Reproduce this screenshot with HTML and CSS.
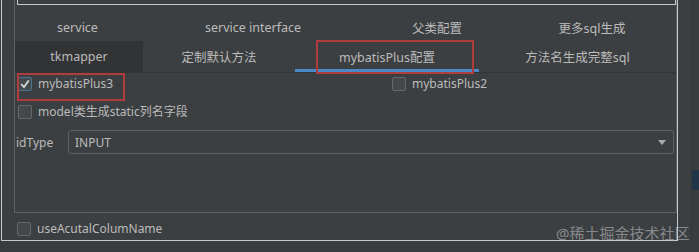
FILE: index.html
```html
<!DOCTYPE html>
<html lang="en">
<head>
  <meta charset="UTF-8" />
  <title>mybatisPlus配置</title>
  <link rel="stylesheet" href="styles.css">
</head>
<body>
  <div class="screen">
    <div class="dialog">
      <div class="panel">
        <div class="topbox"></div>

        <div class="tabs">
          <div class="tab-row row-top">
            <div class="tab">service</div>
            <div class="tab">service interface</div>
            <div class="tab">父类配置</div>
            <div class="tab">更多sql生成</div>
          </div>
          <div class="tab-row row-bottom">
            <div class="tab hover">tkmapper</div>
            <div class="tab">定制默认方法</div>
            <div class="tab active">mybatisPlus配置</div>
            <div class="tab">方法名生成完整sql</div>
          </div>
        </div>

        <div class="options">
          <div class="opt-row">
            <label class="check"><span class="box checked"><svg viewBox="0 0 14 14" width="14" height="14"><polyline points="3.2,7.2 6,10 10.8,3.4" /></svg></span>mybatisPlus3</label>
            <label class="check"><span class="box"></span>mybatisPlus2</label>
          </div>
          <div class="opt-row">
            <label class="check"><span class="box"></span>model类生成static列名字段</label>
          </div>
          <div class="field">
            <span class="field-label">idType</span>
            <div class="combo">
              <span>INPUT</span>
              <svg class="arrow" viewBox="0 0 8 5" width="8" height="5"><polygon points="0,0 8,0 4,5" /></svg>
            </div>
          </div>
        </div>
      </div>

      <div class="footer">
        <label class="check"><span class="box"></span>useAcutalColumName</label>
      </div>
    </div>

    <div class="side">
      <div class="side-gap"></div>
      <div class="rail"><div class="thumb"></div></div>
    </div>
  </div>

  <div class="mark mark-tab"></div>
  <div class="mark mark-check"></div>
  <div class="watermark">@稀土掘金技术社区</div>
</body>
</html>
```

FILE: styles.css
```css
body {
  margin: 0;
  width: 699px;
  height: 252px;
  overflow: hidden;
  background-color: #393b3d;
  font-family: 'Noto Sans', 'Noto Sans CJK SC', sans-serif;
  font-size: 12px;
  color: #bbbbbb;
  position: relative;
}

.screen {
  display: flex;
  height: 241px;
  background-color: #3c3f41;
}

/* outer dialog frame, its top is cut off */
.dialog {
  box-sizing: border-box;
  margin-left: 1px;
  width: 677px;
  height: 241px;
  border: 1px solid #c3c9d1;
  border-top: none;
  padding-left: 12px;
  display: flex;
  flex-direction: column;
}

.panel {
  box-sizing: border-box;
  height: 213px;
  border: 1px solid #5e6062;
  border-top: none;
  display: flex;
  flex-direction: column;
}

.topbox {
  box-sizing: border-box;
  height: 5px;
  margin-left: 2px;
  border: 1px solid #c3c9d1;
  border-top: none;
}

.tabs {
  margin-top: 9px;
  border-bottom: 1px solid #323436;
}

.tab-row {
  display: grid;
}

.row-top {
  grid-template-columns: 125px 226px 142px 1fr;
  height: 27px;
}

.row-bottom {
  grid-template-columns: 128px 152px 184px 1fr;
  height: 31px;
}

.tab {
  display: flex;
  align-items: center;
  justify-content: center;
  white-space: nowrap;
  font-size: 12.5px;
}

.tab.hover {
  background-color: #313335;
}

.tab.active {
  box-shadow: inset 0 -3px 0 #4a88c7;
}

.options {
  padding: 4px 2px 0 3px;
}

.opt-row {
  display: grid;
  grid-template-columns: 374px 1fr;
  margin-bottom: 14px;
}

.check {
  display: flex;
  align-items: center;
  gap: 6px;
  height: 14px;
  line-height: 14px;
  white-space: nowrap;
}

.box {
  box-sizing: border-box;
  width: 14px;
  height: 14px;
  flex: none;
  border: 1px solid #646668;
  border-radius: 2px;
  background-color: #43494a;
}

.box svg {
  display: block;
  margin: -1px;
}

.box polyline {
  fill: none;
  stroke: #d4d4d4;
  stroke-width: 1.8;
}

.box.checked {
  border-color: #4c7394;
}

.field {
  display: flex;
  align-items: center;
  margin-top: -3px;
  margin-left: -3px;
}

.field-label {
  width: 52px;
  padding-left: 1px;
}

.combo {
  box-sizing: border-box;
  flex: 1;
  height: 24px;
  border: 1px solid #5e6062;
  border-radius: 3px;
  display: flex;
  align-items: center;
  justify-content: space-between;
  padding: 0 7px 0 6px;
}

.arrow polygon {
  fill: #a9abad;
}

.footer {
  padding: 9px 0 0 3px;
}

.side {
  flex: 1;
  display: flex;
}

.side-gap {
  width: 13px;
}

.rail {
  flex: 1;
  border-left: 1px solid #323436;
  background-color: #3a3c3e;
  padding-top: 170px;
}

.thumb {
  height: 20px;
  background-color: #22364a;
}

/* red annotation boxes drawn over the screenshot */
.mark {
  position: absolute;
  border: 2px solid #b13c3e;
  box-sizing: border-box;
}

.mark-tab {
  left: 316px;
  top: 40px;
  width: 158px;
  height: 34px;
}

.mark-check {
  left: 17px;
  top: 73px;
  width: 108px;
  height: 28px;
}

.watermark {
  position: absolute;
  left: 556px;
  top: 222px;
  font-size: 15px;
  color: rgba(200, 202, 204, 0.55);
  white-space: nowrap;
}
```
